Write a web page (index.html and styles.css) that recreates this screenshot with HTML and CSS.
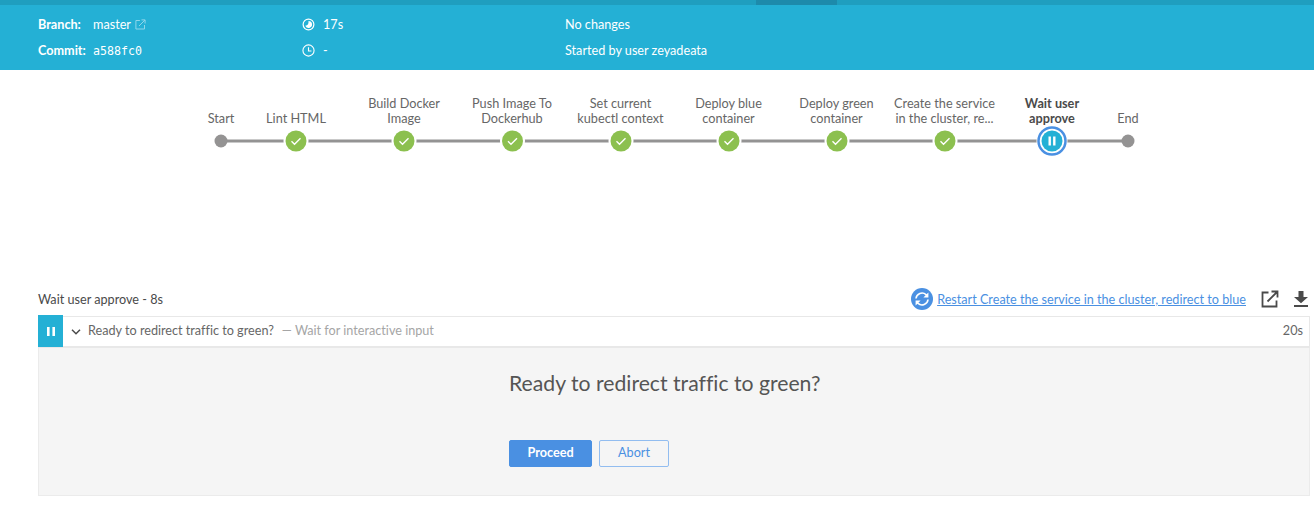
FILE: index.html
```html
<!DOCTYPE html>
<html lang="en">
<head>
    <meta charset="UTF-8">
    <title>Wait user approve</title>
    <link rel="stylesheet" href="styles.css">
</head>
<body>
    <header class="run-header">
        <div class="progress-track"><div class="progress-bar"></div></div>
        <div class="run-details">
            <div class="col col-branch">
                <div class="row"><span class="label">Branch:</span><span>master</span>
                    <svg class="ext-small" width="11" height="11" viewBox="0 0 11 11" fill="none" stroke="#8fd6ea" stroke-width="1"><path d="M9.5 6v4H.9V1.5h4"/><path d="M4 7l6-6M6.5 .9h3.6v3.6"/></svg>
                </div>
                <div class="row"><span class="label">Commit:</span><code class="commit">a588fc0</code></div>
            </div>
            <div class="col col-time">
                <div class="row">
                    <svg class="time-icon" width="13" height="13" viewBox="0 0 14 14"><circle cx="7" cy="7" r="5.8" fill="none" stroke="#fff" stroke-width="1.3"/><path d="M7 3.2a3.8 3.8 0 1 1-3.6 5C5.5 8.6 7.4 6.5 7 3.2z" fill="#fff"/></svg>
                    <span>17s</span>
                </div>
                <div class="row">
                    <svg class="time-icon" width="13" height="13" viewBox="0 0 14 14" fill="none" stroke="#fff" stroke-width="1.2"><circle cx="7" cy="7" r="6"/><path d="M7 3.4V7.6H10.2"/></svg>
                    <span>-</span>
                </div>
            </div>
            <div class="col">
                <div class="row">No changes</div>
                <div class="row">Started by user zeyadeata</div>
            </div>
        </div>
    </header>

    <section class="graph">
        <svg class="graph-svg" width="1314" height="205" viewBox="0 0 1314 205">
            <line class="graph-line" x1="221" y1="71" x2="1128" y2="71"/>

            <text class="graph-label" x="221" y="53">Start</text>
            <text class="graph-label" x="296" y="53">Lint HTML</text>
            <text class="graph-label" x="404" y="38">Build Docker</text>
            <text class="graph-label" x="404" y="53">Image</text>
            <text class="graph-label" x="512" y="38">Push Image To</text>
            <text class="graph-label" x="512" y="53">Dockerhub</text>
            <text class="graph-label" x="620.5" y="38">Set current</text>
            <text class="graph-label" x="620.5" y="53">kubectl context</text>
            <text class="graph-label" x="728.5" y="38">Deploy blue</text>
            <text class="graph-label" x="728.5" y="53">container</text>
            <text class="graph-label" x="836.5" y="38">Deploy green</text>
            <text class="graph-label" x="836.5" y="53">container</text>
            <text class="graph-label" x="944.5" y="38">Create the service</text>
            <text class="graph-label" x="944.5" y="53">in the cluster, re...</text>
            <text class="graph-label current" x="1052" y="38">Wait user</text>
            <text class="graph-label current" x="1052" y="53">approve</text>
            <text class="graph-label" x="1128" y="53">End</text>

            <circle class="node-plain" cx="221" cy="71" r="6.5"/>
            <circle class="node-plain" cx="1128" cy="71" r="6.5"/>

            <g class="node-ok" transform="translate(296 71)"><circle class="halo" r="12.5"/><circle class="disc" r="10.5"/><path class="tick" d="M-4.5 .3L-1.5 3.2 4.5-2.8"/></g>
            <g class="node-ok" transform="translate(404 71)"><circle class="halo" r="12.5"/><circle class="disc" r="10.5"/><path class="tick" d="M-4.5 .3L-1.5 3.2 4.5-2.8"/></g>
            <g class="node-ok" transform="translate(512.5 71)"><circle class="halo" r="12.5"/><circle class="disc" r="10.5"/><path class="tick" d="M-4.5 .3L-1.5 3.2 4.5-2.8"/></g>
            <g class="node-ok" transform="translate(621 71)"><circle class="halo" r="12.5"/><circle class="disc" r="10.5"/><path class="tick" d="M-4.5 .3L-1.5 3.2 4.5-2.8"/></g>
            <g class="node-ok" transform="translate(729 71)"><circle class="halo" r="12.5"/><circle class="disc" r="10.5"/><path class="tick" d="M-4.5 .3L-1.5 3.2 4.5-2.8"/></g>
            <g class="node-ok" transform="translate(837 71)"><circle class="halo" r="12.5"/><circle class="disc" r="10.5"/><path class="tick" d="M-4.5 .3L-1.5 3.2 4.5-2.8"/></g>
            <g class="node-ok" transform="translate(945 71)"><circle class="halo" r="12.5"/><circle class="disc" r="10.5"/><path class="tick" d="M-4.5 .3L-1.5 3.2 4.5-2.8"/></g>

            <g transform="translate(1052 71)">
                <circle r="15.5" fill="#fff"/>
                <circle class="ring" r="13.5"/>
                <circle class="disc-run" r="10.5"/>
                <rect x="-3.5" y="-4.5" width="2.4" height="9" fill="#fff"/>
                <rect x="1.1" y="-4.5" width="2.4" height="9" fill="#fff"/>
            </g>
        </svg>
    </section>

    <main class="step">
        <div class="step-head">
            <div class="step-title">Wait user approve - 8s</div>
            <div class="step-actions">
                <svg class="restart-icon" width="22" height="22" viewBox="0 0 22 22"><circle cx="11" cy="11" r="11" fill="#4a90e2"/><g fill="none" stroke="#fff" stroke-width="1.6"><path d="M5 10.5A6 6 0 0 1 15 6.6l1.2 1.4"/><path d="M17 11.5A6 6 0 0 1 7 15.4L5.8 14"/></g><path d="M17.4 4.6v5h-5zM4.6 17.4v-5h5z" fill="#fff"/></svg>
                <a class="restart-link" href="#">Restart Create the service in the cluster, redirect to blue</a>
                <svg class="action-icon" width="18" height="18" viewBox="0 0 18 18" fill="none" stroke="#4a4a4a" stroke-width="1.8"><path d="M15.5 10.5v6H1.5V2.5h6"/><path d="M6.5 11.5L16 2M10.5 1.5h6v6"/></svg>
                <svg class="action-icon" width="14" height="16" viewBox="0 0 14 16" fill="#4a4a4a"><path d="M4.5 0h5v6H14L7 12.2 0 6h4.5z"/><rect y="14" width="14" height="2"/></svg>
            </div>
        </div>

        <div class="log-row">
            <div class="log-status">
                <svg width="8" height="9" viewBox="0 0 8 9" fill="#fff"><rect width="2.6" height="9"/><rect x="5.4" width="2.6" height="9"/></svg>
            </div>
            <svg class="chevron" width="10" height="6" viewBox="0 0 10 6" fill="none" stroke="#4a4a4a" stroke-width="1.5"><path d="M1 .8l4 4 4-4"/></svg>
            <span class="log-name">Ready to redirect traffic to green?</span>
            <span class="log-desc">&mdash; Wait for interactive input</span>
            <span class="log-time">20s</span>
        </div>

        <div class="input-box">
            <div class="input-inner">
                <h2 class="input-title">Ready to redirect traffic to green?</h2>
                <div class="input-buttons">
                    <button class="btn btn-primary">Proceed</button>
                    <button class="btn btn-secondary">Abort</button>
                </div>
            </div>
        </div>
    </main>
</body>
</html>
```

FILE: styles.css
```css
* {
    box-sizing: border-box;
}
body {
    margin: 0;
    font-family: 'Lato', sans-serif;
    font-size: 12.65px;
    font-variant-ligatures: none;
    color: #4a4a4a;
    background: #fff;
}
.run-header {
    height: 70px;
    background: #24b0d5;
    color: #fff;
}
.progress-track {
    height: 5px;
    background: #1f9ebf;
}
.progress-bar {
    width: 81px;
    height: 5px;
    margin-left: 756px;
    background: #1d8aab;
}
.run-details {
    display: flex;
    padding: 10px 0 0 38px;
}
.col {
    display: flex;
    flex-direction: column;
    gap: 7px;
}
.col-branch {
    width: 264px;
}
.col-time {
    width: 263px;
}
.row {
    display: flex;
    align-items: center;
    height: 19px;
}
.label {
    width: 55px;
    font-weight: 700;
}
.commit {
    font-family: 'DejaVu Sans Mono', monospace;
    font-size: 11.6px;
}
.ext-small {
    margin-left: 4px;
}
.time-icon {
    margin-right: 8px;
}
.graph {
    height: 205px;
}
.graph-svg {
    display: block;
}
.graph-line {
    stroke: #949393;
    stroke-width: 3;
}
.graph-label {
    font-family: 'Lato', sans-serif;
    font-size: 12.7px;
    fill: #666;
    text-anchor: middle;
}
.graph-label.current {
    font-weight: 700;
    fill: #4a4a4a;
}
.node-plain {
    fill: #949393;
}
.halo {
    fill: #fff;
}
.disc {
    fill: #8cc04f;
}
.tick {
    fill: none;
    stroke: #fff;
    stroke-width: 1.4;
}
.ring {
    fill: #fff;
    stroke: #4a90e2;
    stroke-width: 2.5;
}
.disc-run {
    fill: #24b0d5;
}
.step {
    padding: 0 4px 0 38px;
}
.step-head {
    display: flex;
    justify-content: space-between;
    align-items: center;
    height: 41px;
    padding-top: 7px;
}
.step-actions {
    display: flex;
    align-items: center;
}
.restart-icon {
    margin-right: 4px;
}
.restart-link {
    color: #4a90e2;
}
.action-icon {
    margin-left: 15px;
}
.action-icon:last-child {
    margin-left: 15px;
    margin-right: 2px;
}
.log-row {
    display: flex;
    align-items: center;
    height: 32px;
    padding-bottom: 2px;
    background: #fff;
    border: 1px solid #e8e8e8;
    border-bottom-width: 2px;
    border-left: 0;
}
.log-status {
    display: flex;
    align-items: center;
    justify-content: center;
    flex: none;
    width: 25px;
    height: 32px;
    margin-top: 1px;
    background: #24b0d5;
}
.chevron {
    margin: 2px 7px 0 8px;
}
.log-name {
    color: #666;
}
.log-desc {
    margin-left: 8px;
    color: #a5a5a5;
}
.log-time {
    margin-left: auto;
    padding-right: 6px;
    color: #666;
}
.input-box {
    height: 148px;
    background: #f5f5f5;
    border: 1px solid #ebebeb;
    border-top: 0;
    padding-left: 470px;
}
.input-title {
    margin: 0;
    padding-top: 21px;
    font-size: 21.2px;
    font-weight: 400;
    line-height: 28px;
    color: #555;
}
.input-buttons {
    display: flex;
    gap: 7px;
    margin-top: 43px;
}
.btn {
    height: 27px;
    padding: 0 0 3px;
    font-family: 'Lato', sans-serif;
    font-size: 12.65px;
    border-radius: 2px;
}
.btn-primary {
    width: 83px;
    background: #4a90e2;
    border: 1px solid #4a90e2;
    color: #fff;
    font-weight: 700;
}
.btn-secondary {
    width: 70px;
    background: transparent;
    border: 1px solid #92bdf0;
    color: #4a90e2;
}
```
